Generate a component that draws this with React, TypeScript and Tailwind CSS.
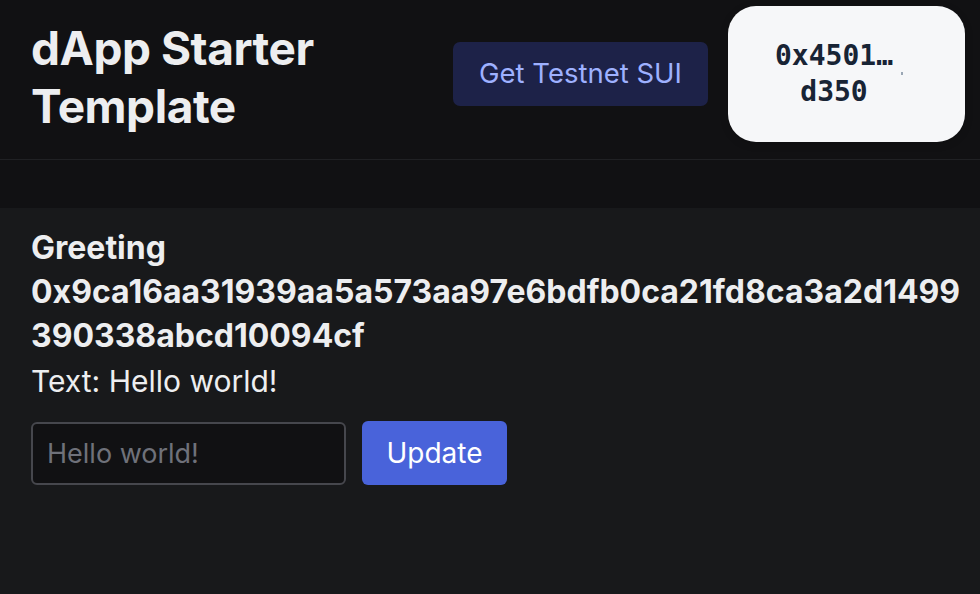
export default function App() {
  return (
    <div className="min-h-[594px] bg-[#111113] font-['Inter','Noto_Sans',sans-serif] text-[#edeef0]">
      {/* header */}
      <header className="h-[160px] flex items-center justify-between pl-[31px] pr-[15px] border-b border-[#202124]">
        <h1 className="text-[46px] leading-[58px] font-bold tracking-[-0.01em] w-[330px] -mt-[5px]">
          dApp Starter Template
        </h1>
        <div className="flex items-center gap-[20px] mb-[12px]">
          <button className="h-[64px] w-[255px] rounded-[7px] bg-[#1d2248] text-[#9eb1ff] text-[27.5px]">
            Get Testnet SUI
          </button>
          <button className="w-[237px] h-[136px] rounded-[28px] bg-[#f6f7f9] text-[#182435] flex items-center pl-[41px] shadow-[0_2px_8px_rgba(0,0,0,0.15)]">
            <span className="w-[130px] text-center font-['DejaVu_Sans_Mono',monospace] font-bold text-[28px] leading-[36px]">
              0x4501… d350
            </span>
            <span className="w-[2px] h-[3px] bg-[#9aa7b5] ml-[2px]" />
          </button>
        </div>
      </header>

      <div className="h-[48px]" />

      {/* content */}
      <main className="bg-[#18191b] min-h-[386px] pl-[31px] pr-[15px] pt-[18px]">
        <h2 className="text-[32px] leading-[44px] font-bold">Greeting</h2>
        <h2 className="text-[32px] leading-[44px] font-bold break-all">
          0x9ca16aa31939aa5a573aa97e6bdfb0ca21fd8ca3a2d1499390338abcd10094cf
        </h2>
        <p className="text-[30px] leading-[46px]">Text: Hello world!</p>
        <div className="flex items-center gap-[16px] mt-[17px]">
          <input
            placeholder="Hello world!"
            className="w-[315px] h-[63px] rounded-[6px] border-2 border-[#46474d] bg-[#111113] px-[14px] text-[27px] text-[#edeef0] placeholder:text-[#6f717a] outline-none"
          />
          <button className="w-[145px] h-[64px] rounded-[6px] bg-[#4963da] text-white text-[28px]">
            Update
          </button>
        </div>
      </main>
    </div>
  )
}
